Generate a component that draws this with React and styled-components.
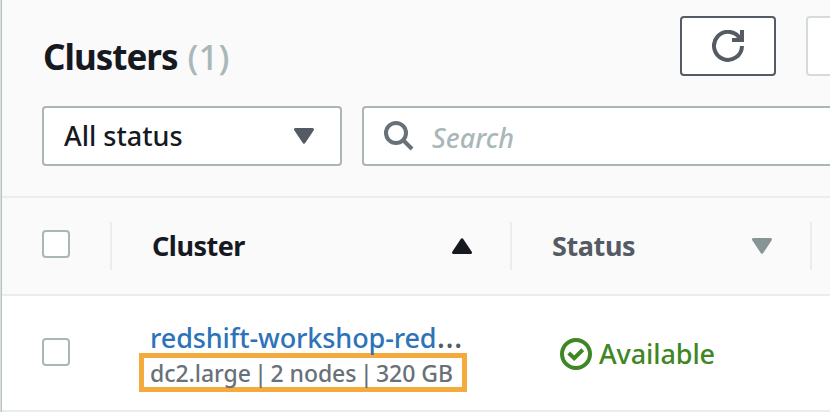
import React from "react";
import styled, { createGlobalStyle } from "styled-components";

const Global = createGlobalStyle`
  * { box-sizing: border-box; }
  body { margin: 0; background: #fff; font-family: "Noto Sans", "Open Sans", sans-serif; overflow: hidden; }
`;

const Panel = styled.main`
  width: 830px;
  height: 412px;
  border-left: 1px solid #d9dede;
  box-shadow: inset 1px 0 #b9c1c1;
  padding-left: 1px;
  overflow: hidden;
  background: #fff;
`;

const Header = styled.header`
  height: 198px;
  padding: 16px 0 0 40px;
  background: #fafafa;
  border-bottom: 2px solid #eaeded;
`;

const TitleRow = styled.div`
  display: flex;
  height: 60px;
`;

const Title = styled.h1`
  margin: 0;
  flex: 0 0 638px;
  display: flex;
  font-size: 35px;
  line-height: 80px;
  color: #16191f;
`;

const Text = styled.span`
  display: block;
  white-space: pre;
  font-size: ${(p) => p.$size}px;
  line-height: ${(p) => p.$line || 40}px;
  font-weight: ${(p) => p.$weight || 500};
  font-style: ${(p) => (p.$italic ? "italic" : "normal")};
  letter-spacing: ${(p) => p.$track || 0}px;
  margin-left: ${(p) => p.$left || 0}px;
  margin-top: ${(p) => p.$top || 0}px;
  color: ${(p) => p.$color};
`;

const Button = styled.button`
  flex: none;
  display: flex;
  align-items: center;
  justify-content: center;
  width: 96px;
  height: 60px;
  padding: 0;
  margin-right: 30px;
  background: #fff;
  border: 2px solid ${(p) => (p.disabled ? "#d5dbdb" : "#545b64")};
  border-radius: 4px;
`;

const Filters = styled.div`
  display: flex;
  gap: 20px;
  margin-top: 30px;
`;

const Field = styled.div`
  flex: none;
  display: flex;
  align-items: center;
  justify-content: ${(p) => (p.$spread ? "space-between" : "flex-start")};
  width: ${(p) => p.$width}px;
  height: 60px;
  padding: 0 26px 0 20px;
  background: #fff;
  border: 2px solid #aab7b8;
  border-radius: 4px;
`;

const Row = styled.div`
  display: grid;
  grid-template-columns: 108px 400px 300px 100px;
  height: ${(p) => p.$height}px;
  background: ${(p) => (p.$head ? "#fafafa" : "#fff")};
  border-bottom: 2px solid #eaeded;
`;

const CheckCell = styled.div`
  padding: ${(p) => p.$top}px 0 0 40px;
`;

const Checkbox = styled.div`
  width: 28px;
  height: 28px;
  background: #fff;
  border: 2px solid #aab7b8;
  border-radius: 4px;
`;

const HeadCell = styled.div`
  height: 48px;
  margin-top: 24px;
  padding: 0 38px 0 40px;
  display: flex;
  justify-content: space-between;
  align-items: center;
  border-left: 2px solid #eaeded;
`;

const ClusterCell = styled.div`
  padding: 22px 0 0 29px;
`;

const NameLine = styled.div`
  display: flex;
  height: 35px;
`;

const Highlight = styled.div`
  display: flex;
  gap: 3.5px;
  width: 328px;
  height: 39px;
  padding-left: 6px;
  border: 5px solid #f4aa3d;
`;

const Meta = styled.span`
  font-size: 23px;
  line-height: 31px;
  font-weight: 500;
  letter-spacing: -0.05px;
  white-space: pre;
  color: #687078;
`;

const StatusCell = styled.div`
  display: flex;
  align-items: flex-start;
  padding: 42px 0 0 50px;
`;

const Icon = styled.svg`
  flex: none;
  display: block;
`;

const Triangle = ({ color, up }) => (
  <Icon width="20" height="16" viewBox="0 0 20 16">
    <path
      d="M1.5 1.5H18.5L10 14.2Z"
      fill={color}
      stroke={color}
      strokeWidth="3"
      strokeLinejoin="round"
      transform={up ? "rotate(180 10 8)" : undefined}
    />
  </Icon>
);

const Refresh = () => (
  <Icon width="32" height="32" viewBox="0 0 32 32" fill="none" stroke="#545b64" strokeWidth="4">
    <path d="M30 16A14 14 0 1 1 28.5 9.5" />
    <path d="M30 0V10H20" />
  </Icon>
);

const Magnifier = () => (
  <Icon width="30" height="30" viewBox="0 0 30 30" fill="none" stroke="#687078" strokeWidth="4">
    <circle cx="12" cy="12" r="10" />
    <path d="M19 19L28 28" />
  </Icon>
);

const Success = () => (
  <Icon width="32" height="32" viewBox="0 0 32 32" fill="none" stroke="#3f8624" strokeWidth="4">
    <circle cx="16" cy="16" r="14" />
    <path d="M8.7 15L14.2 20.2L22.8 11.8" />
  </Icon>
);

export default function App() {
  return (
    <>
      <Global />
      <Panel>
        <Header>
          <TitleRow>
            <Title>
              <Text $size={35} $line={82} $weight={700} $track={-1} $left={1} $color="#16191f">Clusters</Text>
              <Text $size={35} $line={82} $left={10} $color="#aab7b8">(1)</Text>
            </Title>
            <Button aria-label="Refresh"><Refresh /></Button>
            <Button disabled aria-label="Actions" />
          </TitleRow>
          <Filters>
            <Field $width={300} $spread>
              <Text $size={27} $color="#16191f">All status</Text>
              <Triangle color="#545b64" />
            </Field>
            <Field $width={600}>
              <Magnifier />
              <Text $size={27} $italic $left={18} $top={4} $color="#aab7b8">Search</Text>
            </Field>
          </Filters>
        </Header>
        <Row $head $height={98}>
          <CheckCell $top={32}><Checkbox /></CheckCell>
          <HeadCell>
            <Text $size={27} $weight={700} $track={-0.5} $color="#16191f">Cluster</Text>
            <Triangle color="#16191f" up />
          </HeadCell>
          <HeadCell>
            <Text $size={27} $weight={700} $track={-0.4} $color="#545b64">Status</Text>
            <Triangle color="#879596" />
          </HeadCell>
          <HeadCell />
        </Row>
        <Row $height={116}>
          <CheckCell $top={42}><Checkbox /></CheckCell>
          <ClusterCell>
            <NameLine>
              <Text $size={27} $left={11} $track={-0.12} $color="#2e73b8">redshift-workshop-red</Text>
              <Text $size={33} $line={36} $weight={400} $color="#545b64">…</Text>
            </NameLine>
            <Highlight>
              <Meta>dc2.large</Meta>
              <Meta>|</Meta>
              <Meta>2 nodes</Meta>
              <Meta>|</Meta>
              <Meta>320 GB</Meta>
            </Highlight>
          </ClusterCell>
          <StatusCell>
            <Success />
            <Text $size={27} $line={32} $left={7} $track={-0.1} $color="#3f8624">Available</Text>
          </StatusCell>
        </Row>
      </Panel>
    </>
  );
}
